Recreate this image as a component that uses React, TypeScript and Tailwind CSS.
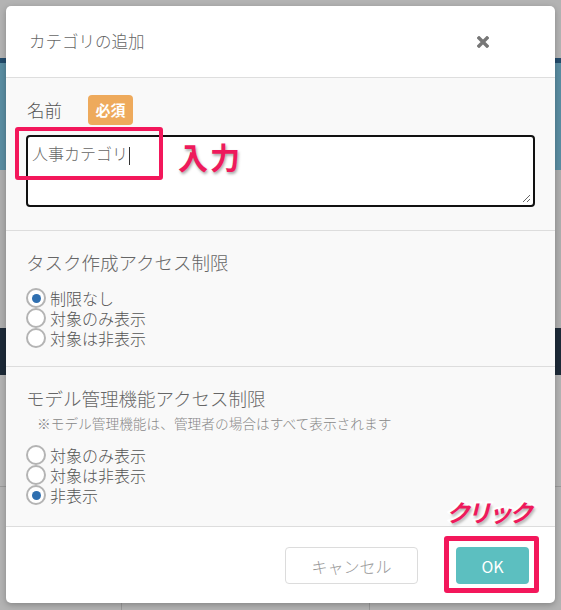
import React from "react";

const jp = { fontFamily: '"Noto Sans CJK JP", "Noto Sans", sans-serif' };

function Radio({ checked, label }: { checked?: boolean; label: string }) {
  return (
    <div className="flex items-center h-[20px]">
      <span className="w-[20px] h-[20px] rounded-full border-2 border-[#b4b4b4] bg-white flex items-center justify-center shrink-0">
        {checked && <span className="w-[9px] h-[9px] rounded-full bg-[#2f6fb0]" />}
      </span>
      <span className="ml-[4px] text-[16px] leading-[20px] font-light text-[#555]">{label}</span>
    </div>
  );
}

export default function App() {
  const annot =
    "font-bold text-[#ee1a5c] leading-none [-webkit-text-stroke:4px_white] [paint-order:stroke_fill] [text-shadow:1px_2px_3px_rgba(0,0,0,0.35)]";
  return (
    <div className="relative w-[561px] h-[610px] overflow-hidden bg-[#b3b3b3]" style={jp}>
      {/* dimmed page behind */}
      <div className="flex flex-col w-full">
        <div className="h-[58px] bg-[#b3b3b3]" />
        <div className="h-[5px] bg-[#234c6c]" />
        <div className="h-[107px] bg-[#5a8da2]" />
        <div className="h-[158px] bg-[#aeaeae]" />
        <div className="h-[47px] bg-[#1d2a38]" />
        <div className="h-[112px] bg-[#b3b3b3] border-b border-[#9a9a9a]" />
        <div className="h-[123px] bg-[#b3b3b3] flex">
          <div className="w-[122px] border-r border-[#999]" />
          <div className="w-[248px] border-r border-[#999]" />
        </div>
      </div>

      {/* modal */}
      <div className="absolute left-[6px] top-[6px] w-[549px] h-[597px] bg-white rounded-[5px] shadow-[0_2px_6px_rgba(0,0,0,0.25)] flex flex-col overflow-hidden">
        <div className="h-[72px] shrink-0 flex items-center justify-between pl-[23px] pr-[66px] border-b border-[#dedede]">
          <span className="text-[16.5px] font-light text-[#666]">カテゴリの追加</span>
          <svg width="12" height="12" viewBox="0 0 12 12">
            <path d="M2 2 L10 10 M10 2 L2 10" stroke="#777" strokeWidth="3.4" strokeLinecap="square" />
          </svg>
        </div>

        <div className="flex-1 bg-[#f9f9f9] flex flex-col">
          {/* name */}
          <div className="h-[153px] border-b border-[#dddddd] px-[20px] pt-[17px]">
            <div className="flex items-center h-[30px]">
              <span className="ml-[1px] text-[17.5px] font-light text-[#555]">名前</span>
              <span className="ml-[26px] w-[45px] h-[30px] rounded-[4px] bg-[#eeaa5c] text-white text-[15px] font-bold flex items-center justify-center">
                必須
              </span>
            </div>
            <div className="relative mt-[10px] h-[72px] rounded-[4px] border-2 border-[#111] bg-white pl-[4px] pt-[4px]">
              <span className="text-[16px] leading-[22px] font-light text-[#666]">人事カテゴリ</span>
              <span className="inline-block align-middle ml-[1px] w-px h-[18px] bg-[#333]" />
              <svg className="absolute right-[2px] bottom-[2px]" width="9" height="9" viewBox="0 0 9 9">
                <path d="M8 1 L1 8 M8 5 L5 8" stroke="#666" strokeWidth="1" />
              </svg>
            </div>
          </div>

          {/* task access */}
          <div className="h-[136px] border-b border-[#dddddd] px-[20px] pt-[19px]">
            <div className="text-[18.5px] leading-[24px] font-light text-[#666]">タスク作成アクセス制限</div>
            <div className="mt-[14px] flex flex-col">
              <Radio checked label="制限なし" />
              <Radio label="対象のみ表示" />
              <Radio label="対象は非表示" />
            </div>
          </div>

          {/* model access */}
          <div className="flex-1 px-[20px] pt-[19px]">
            <div className="text-[18.5px] leading-[24px] font-light text-[#666]">モデル管理機能アクセス制限</div>
            <div className="mt-[4px] ml-[11px] text-[13.7px] leading-[18px] font-light text-[#888]">
              ※モデル管理機能は、管理者の場合はすべて表示されます
            </div>
            <div className="mt-[13px] flex flex-col">
              <Radio label="対象のみ表示" />
              <Radio label="対象は非表示" />
              <Radio checked label="非表示" />
            </div>
          </div>
        </div>

        {/* footer */}
        <div className="h-[77px] shrink-0 border-t border-[#dddddd] flex justify-end items-start pt-[20px] pr-[26px]">
          <button className="w-[133px] h-[37px] rounded-[4px] border border-[#dcdcdc] bg-white text-[16px] font-light text-[#999]">
            キャンセル
          </button>
          <button className="ml-[38px] w-[73px] h-[37px] rounded-[4px] bg-[#5cbfc0] text-[16px] text-white">
            OK
          </button>
        </div>

        {/* annotations */}
        <div className="absolute left-[9px] top-[121px] w-[148px] h-[53px] border-[4px] border-[#f3175b] rounded-[3px]" />
        <div className={`absolute left-[172px] top-[135px] text-[30px] tracking-[2px] ${annot}`}>入力</div>
        <div className="absolute left-[438px] top-[530px] w-[95px] h-[57px] border-[5px] border-[#f3175b] rounded-[3px]" />
        <div className={`absolute left-[440px] top-[494px] text-[24px] tracking-[-3px] italic ${annot}`}>クリック</div>
      </div>
    </div>
  );
}
